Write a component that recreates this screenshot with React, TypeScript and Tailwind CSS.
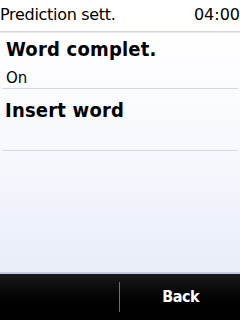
import React from "react";

export default function App() {
  return (
    <div className="w-[240px] h-[320px] flex flex-col overflow-hidden bg-white font-['DejaVu_Sans',sans-serif] text-black">
      {/* status / title bar */}
      <div className="h-[31px] flex items-start justify-between pt-[6px] text-[16px] leading-[18px] bg-white">
        <span className="tracking-[-0.3px]">Prediction sett.</span>
        <span>04:00</span>
      </div>
      <div className="h-[2px] bg-gradient-to-b from-[#c9ccd6] to-[#f1f2f6]" />

      {/* list */}
      <div className="flex-1 flex flex-col bg-gradient-to-b from-white via-[#f6f8fd] to-[#e9edf8]">
        <div className="pl-[6px] pt-[4px] h-[55px]">
          <div className="text-[20px] leading-[24px] font-bold font-['DejaVu_Sans_Condensed','DejaVu_Sans',sans-serif] tracking-[0.2px]">Word complet.</div>
          <div className="pt-[9px] text-[15px] leading-[17px]">On</div>
        </div>
        <div className="h-px mx-[2px] bg-[#d4d6de]" />
        <div className="pl-[5px] pt-[9px] h-[61px]">
          <div className="text-[20px] leading-[24px] font-bold font-['DejaVu_Sans_Condensed','DejaVu_Sans',sans-serif] tracking-[0.2px]">Insert word</div>
        </div>
        <div className="h-px mx-[2px] bg-[#d6d9e2]" />
        <div className="flex-1" />
        <div className="h-[2px] bg-[#c6c8e6]" />
      </div>

      {/* softkeys */}
      <div className="h-[46px] bg-gradient-to-b from-[#1a1a1c] to-black flex items-center">
        <div className="flex-1" />
        <div className="w-px h-[30px] bg-[#6e7074]" />
        <div className="flex-1 flex justify-center pl-[2px]">
          <span className="text-white font-bold text-[16px] font-['DejaVu_Sans_Condensed','DejaVu_Sans',sans-serif] tracking-[-0.5px]">Back</span>
        </div>
      </div>
    </div>
  );
}
